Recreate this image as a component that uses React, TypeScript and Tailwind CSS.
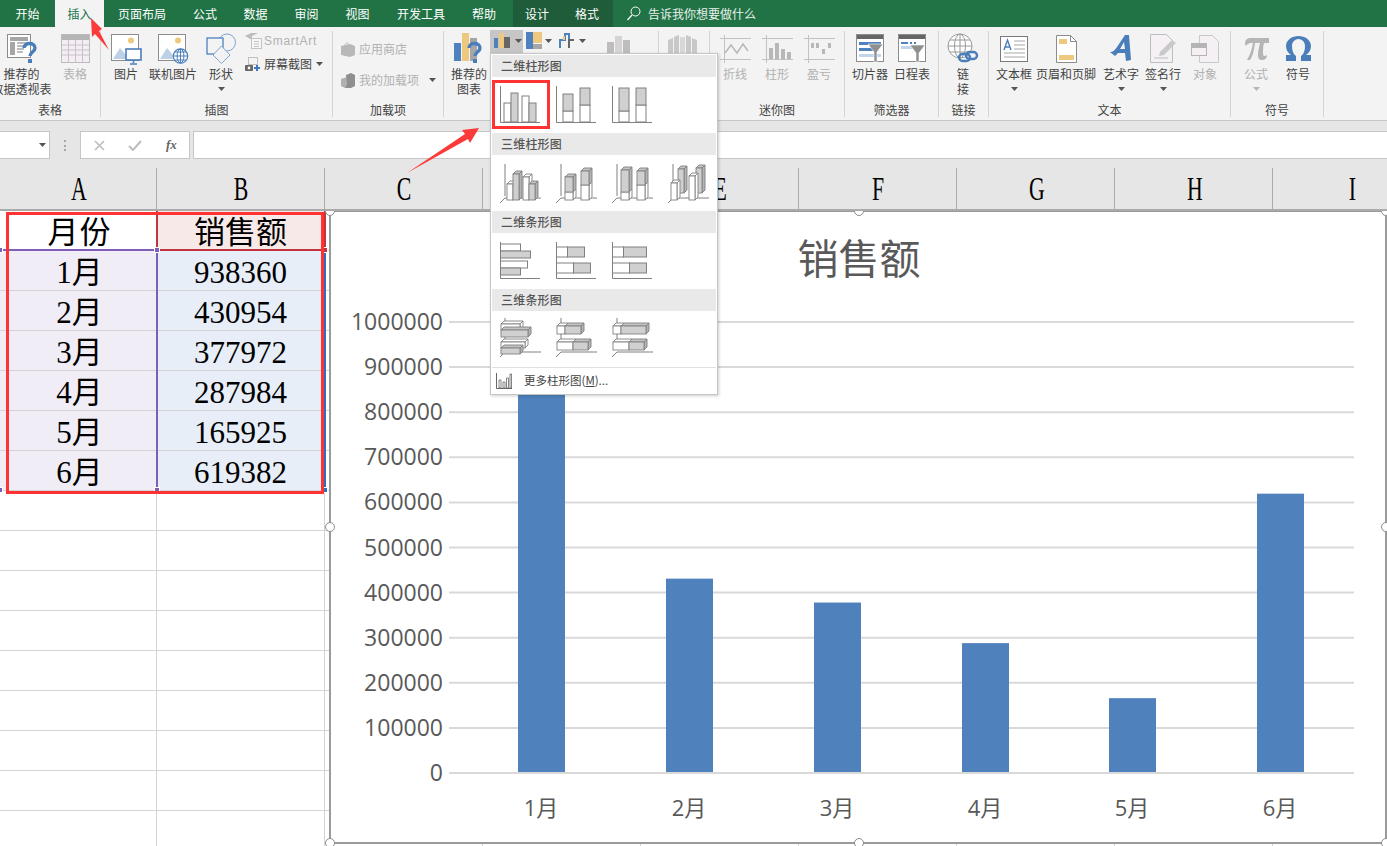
import React from "react"

const SANS = "font-['Noto_Sans_CJK_SC','Liberation_Sans',sans-serif]"
const SERIF = "font-['Liberation_Serif','Noto_Sans_CJK_SC',serif]"

const TABS = [
  { label: "开始", w: "w-[55px]" },
  { label: "插入", w: "w-[49px]", active: true },
  { label: "页面布局", w: "w-[76px]" },
  { label: "公式", w: "w-[50px]" },
  { label: "数据", w: "w-[51px]" },
  { label: "审阅", w: "w-[51px]" },
  { label: "视图", w: "w-[51px]" },
  { label: "开发工具", w: "w-[76px]" },
  { label: "帮助", w: "w-[50px] mr-[4px]" },
  { label: "设计", w: "w-[48px]", dark: true },
  { label: "格式", w: "w-[52px]", dark: true },
]

const COLUMNS = ["A", "B", "C", "D", "E", "F", "G", "H", "I"]
const SALES = [
  { month: "1月", value: 938360, x: 518 },
  { month: "2月", value: 430954, x: 666 },
  { month: "3月", value: 377972, x: 814 },
  { month: "4月", value: 287984, x: 962 },
  { month: "5月", value: 165925, x: 1109 },
  { month: "6月", value: 619382, x: 1257 },
]

function Caret({ muted }: { muted?: boolean }) {
  return (
    <svg width="7" height="4" viewBox="0 0 7 4">
      <path d="M0 0h7L3.5 4z" fill={muted ? "#b5b5b5" : "#555"} />
    </svg>
  )
}

function Big({
  w,
  lines,
  icon,
  caret,
  muted,
}: {
  w: string
  lines: string[]
  icon: React.ReactNode
  caret?: boolean
  muted?: boolean
}) {
  return (
    <div className={`${w} shrink-0 flex flex-col items-center`}>
      <div className="h-[35px] flex items-center justify-center">{icon}</div>
      {lines.map((l) => (
        <div
          key={l}
          className={`text-[12px] leading-[15px] whitespace-nowrap ${muted ? "text-[#b1b1b1]" : "text-[#444]"}`}
        >
          {l}
        </div>
      ))}
      {caret && (
        <div className="h-[15px] flex items-center">
          <Caret muted={muted} />
        </div>
      )}
    </div>
  )
}

function Group({
  w,
  label,
  pl,
  children,
}: {
  w: string
  label: string
  pl: string
  children: React.ReactNode
}) {
  return (
    <div className={`${w} shrink-0 h-[86px] border-r border-[#d4d4d4] flex flex-col`}>
      <div className={`h-[72px] flex ${pl}`}>{children}</div>
      <div className="h-[14px] leading-[14px] text-[12px] text-[#444] text-center">{label}</div>
    </div>
  )
}

function PivotIcon() {
  return (
    <svg width="30" height="31" viewBox="0 0 30 31">
      <rect x="0.5" y="1.5" width="23" height="23" fill="#fff" stroke="#8c8c8c" />
      <rect x="3" y="4" width="18" height="4" fill="#a6a6a6" />
      <rect x="3" y="9" width="5" height="13" fill="#a6a6a6" />
      <path d="M10 10h10M10 13h10M10 16h7M10 19h6" stroke="#a6a6a6" strokeWidth="1.5" />
      <path d="M17 15c0-6 11-6 11 0 0 4-5 4-5 8" fill="none" stroke="#4a7ebb" strokeWidth="3.4" />
      <rect x="21" y="26" width="4" height="4" fill="#4a7ebb" />
    </svg>
  )
}

function TableIcon() {
  return (
    <svg width="29" height="29" viewBox="0 0 29 29">
      <rect x="0.5" y="0.5" width="28" height="28" fill="#f4eef4" stroke="#bcbcbc" />
      <rect x="1" y="1" width="27" height="5" fill="#b5b5b5" />
      <path d="M1 11h27M1 16h27M1 21h27M7.5 6v22M14.5 6v22M21.5 6v22" stroke="#c9c3c9" />
    </svg>
  )
}

function PictureIcon({ badge }: { badge: "screen" | "globe" }) {
  return (
    <svg width="32" height="32" viewBox="0 0 32 32">
      <rect x="1.5" y="1.5" width="27" height="26" fill="#fff" stroke="#8c8c8c" />
      <circle cx="21" cy="7.5" r="3" fill="#edc87e" />
      <path d="M3 26l7-11 6 7 3-3 6 7z" fill="#bcd0e8" />
      {badge === "screen" ? (
        <>
          <rect x="16" y="16" width="15" height="11" fill="#fff" stroke="#4a7ebb" strokeWidth="1.6" />
          <path d="M23.5 27v3M20 31h7" stroke="#4a7ebb" strokeWidth="1.5" />
        </>
      ) : (
        <>
          <circle cx="23.5" cy="23" r="7.2" fill="#fff" stroke="#4a7ebb" strokeWidth="1.2" />
          <path d="M16.5 23h14M23.5 16v14M17.5 19h12M17.5 27h12" stroke="#4a7ebb" />
          <ellipse cx="23.5" cy="23" rx="3.4" ry="7" fill="none" stroke="#4a7ebb" />
        </>
      )}
    </svg>
  )
}

function ShapesIcon() {
  return (
    <svg width="31" height="31" viewBox="0 0 31 31">
      <circle cx="21" cy="9.5" r="8.5" fill="none" stroke="#7fa4d0" />
      <rect x="1" y="5" width="16" height="16" fill="#f3f3f3" stroke="#3f78bb" strokeWidth="1.2" />
      <path d="M15.5 13l8.5 9-8.5 8.5L7 22z" fill="#f3f3f3" stroke="#7fa4d0" />
    </svg>
  )
}

function SmartArtIcon() {
  return (
    <svg width="17" height="16" viewBox="0 0 17 16">
      <path d="M0 3l6-3h7L7 3v4z" fill="#bdbdbd" />
      <rect x="6.5" y="5.5" width="10" height="10" fill="#f7f7f7" stroke="#c4c4c4" />
      <path d="M9 8.5h5M9 11h5M9 13.5h5" stroke="#c4c4c4" />
    </svg>
  )
}

function ScreenshotIcon() {
  return (
    <svg width="16" height="15" viewBox="0 0 16 15">
      <rect x="3.5" y="0.5" width="9" height="7" fill="none" stroke="#8a8a8a" strokeDasharray="1 1" />
      <rect x="0" y="8" width="8" height="6" rx="1" fill="#666" />
      <circle cx="4" cy="11" r="1.4" fill="#fff" />
      <path d="M12 8v6M9 11h6" stroke="#3f78bb" strokeWidth="2" />
    </svg>
  )
}

function StoreIcon() {
  return (
    <svg width="14" height="15" viewBox="0 0 14 15">
      <path d="M0 4l9-2 5 2v9l-5 2-9-2z" fill="#b8b8b8" />
      <path d="M4 4c0-4 4-4 4 0" fill="none" stroke="#b8b8b8" />
    </svg>
  )
}

function AddinIcon() {
  return (
    <svg width="14" height="15" viewBox="0 0 14 15">
      <path d="M0 6l6-2v6l-2 5-4-2z" fill="#b0b0b0" />
      <path d="M5 2l5-2 4 2v11l-4 2H4l2-5z" fill="#8f8f8f" />
    </svg>
  )
}

function RecommendChartIcon() {
  return (
    <svg width="30" height="31" viewBox="0 0 30 31">
      <rect x="0" y="10" width="7" height="18" fill="#4e81bd" />
      <rect x="8" y="0" width="7" height="28" fill="#edc87e" />
      <rect x="16" y="5" width="7" height="23" fill="#a6a6a6" />
      <path d="M15 15c0-6 11-6 11 0 0 4-5 4-5 8" fill="none" stroke="#4a7ebb" strokeWidth="3.4" />
      <rect x="19" y="26" width="4" height="4" fill="#4a7ebb" />
    </svg>
  )
}

function SparkFrame({ children }: { children: React.ReactNode }) {
  return (
    <svg width="31" height="28" viewBox="0 0 31 28">
      <path d="M0 3.5h31M0 24.5h31M4.5 0v28" stroke="#c2c2c2" />
      {children}
    </svg>
  )
}

function SlicerIcon() {
  return (
    <svg width="29" height="29" viewBox="0 0 29 29">
      <rect x="0.5" y="0.5" width="27" height="27" fill="#fff" stroke="#8c8c8c" />
      <rect x="1" y="1" width="26" height="4" fill="#666" />
      <rect x="3" y="8" width="22" height="3" fill="#4e81bd" />
      <rect x="3" y="14" width="14" height="3" fill="#4e81bd" />
      <rect x="3" y="20" width="22" height="3" fill="#c3d5ea" />
      <path d="M12 10h15l-6 8v10h-3V18z" fill="#8f8f8f" stroke="#fff" strokeWidth="0.6" />
    </svg>
  )
}

function TimelineIcon() {
  return (
    <svg width="29" height="29" viewBox="0 0 29 29">
      <rect x="0.5" y="0.5" width="27" height="27" fill="#fff" stroke="#8c8c8c" />
      <rect x="1" y="1" width="26" height="4" fill="#666" />
      <path d="M3 9h7" stroke="#4e81bd" strokeWidth="2" />
      <path d="M12 9h2M16 9h2" stroke="#4e81bd" strokeWidth="2" />
      <rect x="3" y="12" width="22" height="3" fill="#c3d5ea" />
      <path d="M12 11h15l-6 8v9h-3v-9z" fill="#8f8f8f" stroke="#fff" strokeWidth="0.6" />
    </svg>
  )
}

function LinkIcon() {
  return (
    <svg width="32" height="31" viewBox="0 0 32 31">
      <circle cx="13" cy="13" r="12" fill="#fff" stroke="#9a9a9a" />
      <ellipse cx="13" cy="13" rx="5.5" ry="12" fill="none" stroke="#9a9a9a" />
      <path d="M1 13h24M3 7h20M3 19h20M13 1v24" stroke="#9a9a9a" />
      <rect x="12" y="21" width="11" height="7" rx="3.5" fill="none" stroke="#4a7ebb" strokeWidth="2.4" />
      <rect x="19" y="19" width="11" height="7" rx="3.5" fill="none" stroke="#4a7ebb" strokeWidth="2.4" />
    </svg>
  )
}

function TextBoxIcon() {
  return (
    <svg width="28" height="26" viewBox="0 0 28 26">
      <rect x="0.5" y="0.5" width="27" height="25" fill="#fff" stroke="#7a7a7a" />
      <path d="M4 14l3.5-10L11 14M5.2 11h4.6" fill="none" stroke="#4a7ebb" strokeWidth="1.4" />
      <path d="M14 5h11M14 9h11M14 13h11M4 17h21M4 21h21" stroke="#a6a6a6" />
    </svg>
  )
}

function HeaderFooterIcon() {
  return (
    <svg width="21" height="28" viewBox="0 0 21 28">
      <path d="M0.5 0.5h14l6 6v21H.5z" fill="#fff" stroke="#8c8c8c" />
      <path d="M14.5 .5v6h6" fill="none" stroke="#8c8c8c" />
      <rect x="3" y="4" width="8" height="5" fill="#edc87e" />
      <rect x="3" y="20" width="15" height="5" fill="#edc87e" />
    </svg>
  )
}

function WordArtIcon() {
  return (
    <svg width="22" height="27" viewBox="0 0 22 27">
      <path d="M0 17c3 0 5-2 7-5L15 0h4l2 25-5 1-1-8H8l-3 3zM10 14h5l-1-7z" fill="#4a7ebb" fillRule="evenodd" />
    </svg>
  )
}

function SignatureIcon() {
  return (
    <svg width="27" height="29" viewBox="0 0 27 29">
      <path d="M0.5 0.5h16l6 6v22H.5z" fill="#f4f0f4" stroke="#bdbdbd" />
      <path d="M4 24h14" stroke="#bdbdbd" />
      <path d="M9 22l1-4L22 6l4 3-12 12z" fill="#c9c9c9" />
    </svg>
  )
}

function ObjectIcon() {
  return (
    <svg width="28" height="28" viewBox="0 0 28 28">
      <path d="M8.5 .5h13l6 6v21h-19z" fill="#f4f0f4" stroke="#c8c8c8" />
      <rect x="0.5" y="8.5" width="15" height="12" fill="#f4f0f4" stroke="#b5b5b5" />
      <rect x="1" y="9" width="14" height="4" fill="#b5b5b5" />
    </svg>
  )
}

function PiIcon() {
  return (
    <svg width="25" height="24" viewBox="0 0 25 24">
      <path
        d="M1 7c0-4 2-6 6-6h18v5h-5c-1 4-1 7-1 10 0 3 1 3 2 3l2-1c0 3-2 5-5 5-3 0-4-2-4-5 0-4 1-8 2-12h-5c-1 7-2 13-5 17H3C6 18 8 12 9 6H7C5 6 3 7 2 9z"
        fill="#b5b5b5"
      />
    </svg>
  )
}

function OmegaIcon() {
  return (
    <svg width="25" height="25" viewBox="0 0 25 25">
      <path
        d="M0 25v-6h5C2 17 0 14 0 10 0 4 6 0 12.5 0S25 4 25 10c0 4-2 7-5 9h5v6H15v-5c3-2 4-6 4-10 0-4-3-7-6.5-7S6 6 6 10c0 4 1 8 4 10v5z"
        fill="#4a7ebb"
      />
    </svg>
  )
}

function Ribbon() {
  return (
    <div className="h-[94px] bg-[#f3f3f3] border-b border-[#c6c6c6] flex items-start pt-[4px]">
      <Group w="w-[101px]" label="表格" pl="-ml-[9px]">
        <Big w="w-[61px]" lines={["推荐的", "数据透视表"]} icon={<PivotIcon />} />
        <Big w="w-[46px]" lines={["表格"]} icon={<TableIcon />} muted />
      </Group>
      <Group w="w-[232px]" label="插图" pl="pl-[2px]">
        <Big w="w-[46px]" lines={["图片"]} icon={<PictureIcon badge="screen" />} />
        <Big w="w-[48px]" lines={["联机图片"]} icon={<PictureIcon badge="globe" />} />
        <Big w="w-[48px]" lines={["形状"]} icon={<ShapesIcon />} caret />
        <div className="flex flex-col pt-[1px] text-[12px] leading-[18px]">
          <div className="h-[18px] flex items-center gap-[2px] text-[#b1b1b1] font-['Liberation_Sans',sans-serif] text-[12px] tracking-[0.7px]">
            <SmartArtIcon />
            SmartArt
          </div>
          <div className="h-[18px] mt-[5px] flex items-center gap-[3px] text-[#444]">
            <ScreenshotIcon />
            屏幕截图
            <span className="ml-[1px]">
              <Caret />
            </span>
          </div>
        </div>
      </Group>
      <Group w="w-[111px]" label="加载项" pl="pl-[8px]">
        <div className="flex flex-col pt-[9px] text-[12px] text-[#b1b1b1]">
          <div className="h-[18px] flex items-center gap-[4px]">
            <StoreIcon />
            应用商店
          </div>
          <div className="h-[18px] mt-[13px] flex items-center gap-[4px]">
            <AddinIcon />
            我的加载项
            <span className="ml-[6px]">
              <Caret />
            </span>
          </div>
        </div>
      </Group>
      <Group w="w-[215px]" label="" pl="pl-[2px]">
        <Big w="w-[46px]" lines={["推荐的", "图表"]} icon={<RecommendChartIcon />} />
        <div className="flex h-[23px] -ml-[2px] -mt-[1px] items-start">
          <div className="w-[33px] h-[23px] bg-[#c6c6c6] flex items-start pl-[4px] pt-[3px] gap-[5px]">
            <svg width="16" height="15" viewBox="0 0 16 15">
              <rect x="0" y="5" width="4" height="10" fill="#4e81bd" />
              <rect x="5" y="0" width="5" height="15" fill="#edc87e" />
              <rect x="10" y="4" width="6" height="11" fill="#666" />
            </svg>
            <span className="mt-[6px] flex">
              <Caret />
            </span>
          </div>
          <div className="w-[36px] pl-[3px] pt-[2px] flex items-start gap-[3px]">
            <svg width="16" height="17" viewBox="0 0 16 17">
              <rect x="0" y="0" width="7" height="17" fill="#4e81bd" />
              <rect x="7" y="0" width="9" height="11" fill="#edc87e" />
              <rect x="7" y="12" width="9" height="5" fill="#a6a6a6" />
            </svg>
            <span className="mt-[7px] flex">
              <Caret />
            </span>
          </div>
          <div className="w-[48px] pt-[3px] flex items-start gap-[4px]">
            <svg width="16" height="15" viewBox="0 0 16 15">
              <path d="M1 15V7h5V1h4v8" fill="none" stroke="#4e81bd" strokeWidth="2" />
              <path d="M10 15V7h5" fill="none" stroke="#666" strokeWidth="2" />
              <path d="M5 7V3" stroke="#edc87e" strokeWidth="2" />
            </svg>
            <span className="mt-[6px] flex">
              <Caret />
            </span>
          </div>
          <svg className="mt-[6px]" width="30" height="18" viewBox="0 0 30 18">
            <rect x="0" y="6" width="7" height="12" fill="#bdbdbd" />
            <rect x="8" y="0" width="7" height="18" fill="#d6d2d6" />
            <rect x="16" y="4" width="7" height="14" fill="#bdbdbd" />
          </svg>
        </div>
      </Group>
      <Group w="w-[51px]" label="" pl="pl-[9px]">
        <svg className="mt-[4px]" width="30" height="18" viewBox="0 0 30 18">
          <path d="M0 18V5l5-2v15zM6 18V2l5-2v18zM18 18V0l5 2v16zM24 18V3l5 2v13z" fill="#c8c8c8" />
          <path d="M12 18V2h5v16z" fill="#d8d8d8" />
        </svg>
      </Group>
      <Group w="w-[135px]" label="迷你图" pl="pl-[4px]">
        <Big
          w="w-[42px]"
          lines={["折线"]}
          muted
          icon={
            <SparkFrame>
              <path d="M5 18l6-8 6 8 6-9 5 7" fill="none" stroke="#b5b5b5" strokeWidth="1.4" />
            </SparkFrame>
          }
        />
        <Big
          w="w-[42px]"
          lines={["柱形"]}
          muted
          icon={
            <SparkFrame>
              <path d="M7 13h4v11H7zM13 8h4v16h-4zM19 14h4v10h-4zM25 17h4v7h-4z" fill="#b8b8b8" />
            </SparkFrame>
          }
        />
        <Big
          w="w-[42px]"
          lines={["盈亏"]}
          muted
          icon={
            <SparkFrame>
              <path d="M7 8h3v5H7zM12 8h3v5h-3zM18 14h3v5h-3zM24 8h3v5h-3z" fill="#b8b8b8" />
            </SparkFrame>
          }
        />
      </Group>
      <Group w="w-[94px]" label="筛选器" pl="pl-[4px]">
        <Big w="w-[42px]" lines={["切片器"]} icon={<SlicerIcon />} />
        <Big w="w-[42px]" lines={["日程表"]} icon={<TimelineIcon />} />
      </Group>
      <Group w="w-[50px]" label="链接" pl="pl-[4px]">
        <Big w="w-[40px]" lines={["链", "接"]} icon={<LinkIcon />} />
      </Group>
      <Group w="w-[242px]" label="文本" pl="pl-[5px]">
        <Big w="w-[40px]" lines={["文本框"]} icon={<TextBoxIcon />} caret />
        <Big w="w-[64px]" lines={["页眉和页脚"]} icon={<HeaderFooterIcon />} />
        <Big w="w-[46px]" lines={["艺术字"]} icon={<WordArtIcon />} caret />
        <Big w="w-[38px]" lines={["签名行"]} icon={<SignatureIcon />} caret />
        <Big w="w-[46px]" lines={["对象"]} icon={<ObjectIcon />} muted />
      </Group>
      <Group w="w-[93px]" label="符号" pl="pl-[4px]">
        <Big w="w-[42px]" lines={["公式"]} icon={<PiIcon />} caret muted />
        <Big w="w-[42px]" lines={["符号"]} icon={<OmegaIcon />} />
      </Group>
    </div>
  )
}

function FormulaBar() {
  return (
    <div className="h-[38px] bg-[#e6e6e6] pt-[10px] flex items-stretch">
      <div className="w-[50px] bg-white border border-l-0 border-[#c6c6c6] flex items-center justify-end pr-[3px]">
        <Caret />
      </div>
      <div className="w-[30px] flex items-center justify-center">
        <div className="h-[11px] border-l-2 border-dotted border-[#a6a6a6]" />
      </div>
      <div className="w-[110px] bg-white border border-[#c6c6c6] flex items-center">
        <svg className="ml-[13px]" width="11" height="11" viewBox="0 0 11 11">
          <path d="M1 1l9 9M10 1l-9 9" stroke="#bdbdbd" strokeWidth="1.6" />
        </svg>
        <svg className="ml-[23px]" width="14" height="11" viewBox="0 0 14 11">
          <path d="M1 6l4 4 8-9" fill="none" stroke="#bdbdbd" strokeWidth="2" />
        </svg>
        <span className="ml-[24px] text-[13px] italic font-bold text-[#666] font-['Liberation_Serif',serif]">
          fx
        </span>
      </div>
      <div className="w-[3px]" />
      <div className="flex-1 bg-white border border-r-0 border-[#c6c6c6]" />
    </div>
  )
}

function ColumnHeaders() {
  const widths = ["w-[157px]", "w-[168px]", "w-[158px]", "w-[158px]", "w-[158px]", "w-[158px]", "w-[158px]", "w-[158px]", "w-[158px]"]
  return (
    <div className="h-[52px] bg-[#e6e6e6] border-b-2 border-[#ababab] flex items-end">
      {COLUMNS.map((c, i) => (
        <div
          key={c}
          className={`${widths[i]} shrink-0 h-[41px] pt-[2px] pl-[2px] border-r border-[#ababab] flex items-center justify-center ${SERIF} text-[33px] leading-none text-black`}
        >
          <span className="inline-block scale-x-[0.66]">{c}</span>
        </div>
      ))}
    </div>
  )
}

function SheetGrid() {
  const rows = Array.from({ length: 16 }, (_, i) => i)
  const colW = "grid-cols-[157px_168px_158px_158px_158px_158px_158px_158px_158px]"
  return (
    <div className={`grid ${colW} auto-rows-[40px]`}>
      {rows.map((r) =>
        COLUMNS.map((c, ci) => {
          const sale = SALES[r - 1]
          let bg = "bg-white"
          let text = ""
          if (r === 0 && ci === 0) text = "月份"
          if (r === 0 && ci === 1) {
            text = "销售额"
            bg = "bg-[#f8e9e9]"
          }
          if (sale && ci === 0) {
            text = sale.month
            bg = "bg-[#f0edf6]"
          }
          if (sale && ci === 1) {
            text = String(sale.value)
            bg = "bg-[#e7eef8]"
          }
          return (
            <div
              key={`${r}-${c}`}
              className={`${bg} pt-[3px] ${ci === 0 ? "pl-[3px]" : ""} border-r border-b border-[#d4d4d4] flex items-center justify-center text-[31px] leading-none text-black ${SERIF} ${r === 0 && ci === 0 ? "tracking-[1px]" : ""}`}
            >
              {text}
            </div>
          )
        }),
      )}
    </div>
  )
}

function Handle({ cls, color }: { cls: string; color: string }) {
  return <div className={`absolute w-[6px] h-[6px] border border-white ${cls} ${color}`} />
}

function RangeMarks() {
  return (
    <>
      <div className="absolute left-0 top-[38px] w-[157px] h-[2px] bg-[#7f5fb5]" />
      <div className="absolute left-[156px] top-[38px] w-[2px] h-[241px] bg-[#7f5fb5]" />
      <div className="absolute left-[157px] top-[38px] w-[168px] h-[2px] bg-[#c0353c]" />
      <div className="absolute left-[156px] top-0 w-[2px] h-[39px] bg-[#c0353c]" />
      <div className="absolute left-[324px] top-0 w-[2px] h-[39px] bg-[#c0353c]" />
      <div className="absolute left-[324px] top-[39px] w-[2px] h-[241px] bg-[#2e6ebd]" />
      <Handle cls="-left-[3px] top-[36px]" color="bg-[#7f5fb5]" />
      <Handle cls="left-[154px] top-[36px]" color="bg-[#7f5fb5]" />
      <Handle cls="-left-[3px] top-[276px]" color="bg-[#7f5fb5]" />
      <Handle cls="left-[154px] top-[276px]" color="bg-[#7f5fb5]" />
      <Handle cls="left-[322px] top-[36px]" color="bg-[#c0353c]" />
      <Handle cls="left-[322px] top-[276px]" color="bg-[#2e6ebd]" />
      <div className="absolute left-[6px] top-[1px] w-[318px] h-[282px] border-[3px] border-[#ff3333]" />
    </>
  )
}

function SalesChart() {
  const ticks = Array.from({ length: 11 }, (_, i) => i)
  const y = (v: number) => 773 - (v / 1000000) * 451
  return (
    <svg
      className="absolute left-[325px] top-0"
      width="1062"
      height="635"
      viewBox="325 211 1062 635"
    >
      <rect x="330" y="211" width="1056" height="632" fill="#fff" stroke="#9a9a9a" strokeWidth="2" />
      <text x="859" y="274" textAnchor="middle" fontSize="41" fill="#595959" fontFamily="Noto Sans CJK SC">
        销售额
      </text>
      {ticks.map((t) => (
        <g key={t}>
          <line x1="449" x2="1354" y1={y(t * 100000)} y2={y(t * 100000)} stroke="#d9d9d9" strokeWidth="2" />
          <text
            x="443"
            y={y(t * 100000) + 8}
            textAnchor="end"
            fontSize="23"
            fill="#595959"
            fontFamily="Open Sans"
          >
            {t * 100000}
          </text>
        </g>
      ))}
      {SALES.map((s) => (
        <g key={s.month}>
          <rect x={s.x} y={y(s.value)} width="47" height={772 - y(s.value)} fill="#4f81bd" />
          <text
            x={s.x + 23}
            y="816"
            textAnchor="middle"
            fontSize="22"
            fill="#595959"
            fontFamily="Open Sans, Noto Sans CJK SC"
          >
            {s.month}
          </text>
        </g>
      ))}
      {[
        [330, 211],
        [859, 211],
        [1386, 211],
        [330, 527],
        [1386, 527],
        [330, 843],
        [859, 843],
        [1386, 843],
      ].map(([cx, cy]) => (
        <circle key={`${cx}-${cy}`} cx={cx} cy={cy} r="4.5" fill="#fff" stroke="#8c8c8c" />
      ))}
    </svg>
  )
}

function Box3D({
  x,
  y,
  w,
  h,
  gray,
  d = 3,
}: {
  x: number
  y: number
  w: number
  h: number
  gray?: boolean
  d?: number
}) {
  const fill = gray ? "#d0d0d0" : "#fff"
  return (
    <g fill={fill} stroke="#808080" strokeWidth="0.9">
      <path d={`M${x} ${y}l${d} -${d}h${w}l-${d} ${d}z`} fill={gray ? "#c4c4c4" : "#fff"} />
      <path d={`M${x + w} ${y}l${d} -${d}v${h}l-${d} ${d}z`} fill={gray ? "#b4b4b4" : "#fff"} />
      <rect x={x} y={y} width={w} height={h} />
    </g>
  )
}

function Flat({ x, y, w, h, gray }: { x: number; y: number; w: number; h: number; gray?: boolean }) {
  return <rect x={x} y={y} width={w} height={h} fill={gray ? "#d0d0d0" : "#fff"} stroke="#808080" />
}

function ChartThumb({ children, axis3d }: { children: React.ReactNode; axis3d?: boolean }) {
  return (
    <svg width="44" height="42" viewBox="-1 -1 44 42" className="shrink-0">
      {axis3d ? (
        <path d="M5 0v32M0 39l5-5h36" fill="none" stroke="#808080" />
      ) : (
        <path d="M.5 0v36.5H40" fill="none" stroke="#808080" />
      )}
      {children}
    </svg>
  )
}

function MenuHeader({ label }: { label: string }) {
  return (
    <div className="h-[22px] bg-[#e9e9e9] pl-[9px] text-[12px] leading-[22px] font-medium text-[#555] tracking-[0.2px]">
      {label}
    </div>
  )
}

function ChartMenu() {
  return (
    <div className="absolute left-[490px] top-[53px] w-[228px] h-[342px] bg-white border border-[#c6c6c6] shadow-[1px_1px_3px_rgba(0,0,0,0.2)] px-[1px] pt-[1px]">
      <MenuHeader label="二维柱形图" />
      <div className="h-[56px] relative flex items-start pl-[7px] pt-[8px] gap-[12px]">
        <ChartThumb>
          <Flat x={4} y={17} w={7} h={19} />
          <Flat x={11} y={7} w={7} h={29} gray />
          <Flat x={22} y={10} w={7} h={26} />
          <Flat x={29} y={17} w={7} h={19} gray />
        </ChartThumb>
        <ChartThumb>
          <Flat x={7} y={25} w={10} h={11} />
          <Flat x={7} y={8} w={10} h={17} gray />
          <Flat x={24} y={19} w={10} h={17} />
          <Flat x={24} y={2} w={10} h={17} gray />
        </ChartThumb>
        <ChartThumb>
          <Flat x={7} y={25} w={10} h={11} />
          <Flat x={7} y={2} w={10} h={23} gray />
          <Flat x={24} y={19} w={10} h={17} />
          <Flat x={24} y={2} w={10} h={17} gray />
        </ChartThumb>
        <div className="absolute left-0 top-[3px] w-[58px] h-[49px] border-[3px] border-[#ff3333]" />
      </div>
      <MenuHeader label="三维柱形图" />
      <div className="h-[56px] flex items-start pl-[7px] pt-[8px] gap-[12px]">
        <ChartThumb axis3d>
          <Box3D x={7} y={20} w={6} h={16} />
          <Box3D x={13} y={10} w={6} h={26} gray />
          <Box3D x={23} y={13} w={6} h={23} />
          <Box3D x={29} y={20} w={6} h={16} gray />
        </ChartThumb>
        <ChartThumb axis3d>
          <Box3D x={9} y={28} w={8} h={8} />
          <Box3D x={9} y={13} w={8} h={15} gray />
          <Box3D x={25} y={21} w={8} h={15} />
          <Box3D x={25} y={7} w={8} h={14} gray />
        </ChartThumb>
        <ChartThumb axis3d>
          <Box3D x={9} y={28} w={8} h={8} />
          <Box3D x={9} y={6} w={8} h={22} gray />
          <Box3D x={25} y={21} w={8} h={15} />
          <Box3D x={25} y={7} w={8} h={14} gray />
        </ChartThumb>
        <ChartThumb axis3d>
          <Box3D x={10} y={5} w={6} h={24} gray />
          <Box3D x={3} y={19} w={6} h={17} />
          <Box3D x={28} y={4} w={6} h={25} gray />
          <Box3D x={21} y={12} w={6} h={24} />
        </ChartThumb>
      </div>
      <MenuHeader label="二维条形图" />
      <div className="h-[56px] flex items-start pl-[7px] pt-[8px] gap-[12px]">
        <ChartThumb>
          <Flat x={0.5} y={2} w={20} h={7} />
          <Flat x={0.5} y={9} w={30} h={7} gray />
          <Flat x={0.5} y={19} w={27} h={7} />
          <Flat x={0.5} y={26} w={20} h={7} gray />
        </ChartThumb>
        <ChartThumb>
          <Flat x={0.5} y={5} w={11} h={10} />
          <Flat x={11.5} y={5} w={17} h={10} gray />
          <Flat x={0.5} y={21} w={17} h={10} />
          <Flat x={17.5} y={21} w={17} h={10} gray />
        </ChartThumb>
        <ChartThumb>
          <Flat x={0.5} y={5} w={11} h={10} />
          <Flat x={11.5} y={5} w={23} h={10} gray />
          <Flat x={0.5} y={21} w={17} h={10} />
          <Flat x={17.5} y={21} w={17} h={10} gray />
        </ChartThumb>
      </div>
      <MenuHeader label="三维条形图" />
      <div className="h-[56px] flex items-start pl-[7px] pt-[6px] gap-[12px]">
        <ChartThumb axis3d>
          <Box3D x={1} y={6} w={19} h={6} />
          <Box3D x={1} y={12} w={27} h={7} gray />
          <Box3D x={1} y={24} w={24} h={6} />
          <Box3D x={1} y={30} w={19} h={6} gray />
        </ChartThumb>
        <ChartThumb axis3d>
          <Box3D x={1} y={8} w={8} h={8} />
          <Box3D x={9} y={8} w={16} h={8} gray />
          <Box3D x={1} y={24} w={16} h={8} />
          <Box3D x={17} y={24} w={15} h={8} gray />
        </ChartThumb>
        <ChartThumb axis3d>
          <Box3D x={1} y={8} w={8} h={8} />
          <Box3D x={9} y={8} w={25} h={8} gray />
          <Box3D x={1} y={24} w={16} h={8} />
          <Box3D x={17} y={24} w={15} h={8} gray />
        </ChartThumb>
      </div>
      <div className="h-[27px] border-t border-[#e0e0e0] flex items-center pl-[4px] text-[11.5px] text-[#444]">
        <svg width="16" height="16" viewBox="0 0 16 16">
          <path d="M.5 0v15.5H16" fill="none" stroke="#666" />
          <path d="M3 15V7h2v8zM7 15V9h2v6zM10.5 15V5h2v10zM14 15V1h1.5v14z" fill="#fff" stroke="#666" strokeWidth="0.8" />
        </svg>
        <span className="ml-[12px]">
          更多柱形图(<span className="underline">M</span>)...
        </span>
      </div>
    </div>
  )
}

function Annotations() {
  return (
    <svg className="absolute left-0 top-0 pointer-events-none" width="500" height="200" viewBox="0 0 500 200">
      <path d="M91 18L102 29l-3 2L109 50 95 34l-3 3z" fill="#fb3a3a" />
      <path d="M479 128l-17 2 3 4-58 39 61-34 2 4z" fill="#fb3a3a" />
    </svg>
  )
}

export default function App() {
  return (
    <div className={`relative w-[1387px] h-[846px] overflow-hidden bg-white ${SANS}`}>
      <div className="h-[27px] bg-[#217346] flex text-[12px] leading-[27px] text-center">
        {TABS.map((t) => (
          <div
            key={t.label}
            className={`${t.w} shrink-0 ${t.active ? "bg-[#f3f3f3] text-[#217346]" : "text-white"} ${t.dark ? "bg-[#1e5c3a]" : ""}`}
          >
            {t.label}
          </div>
        ))}
        <div className="ml-[14px] flex items-center gap-[7px] text-white/90">
          <svg width="14" height="15" viewBox="0 0 14 15">
            <circle cx="8.5" cy="5.5" r="4.5" fill="none" stroke="#fff" />
            <path d="M5 9l-4.5 5" stroke="#fff" strokeWidth="1.2" />
          </svg>
          告诉我你想要做什么
        </div>
      </div>
      <Ribbon />
      <FormulaBar />
      <ColumnHeaders />
      <div className="relative h-[635px]">
        <SheetGrid />
        <RangeMarks />
        <SalesChart />
      </div>
      <ChartMenu />
      <Annotations />
    </div>
  )
}
